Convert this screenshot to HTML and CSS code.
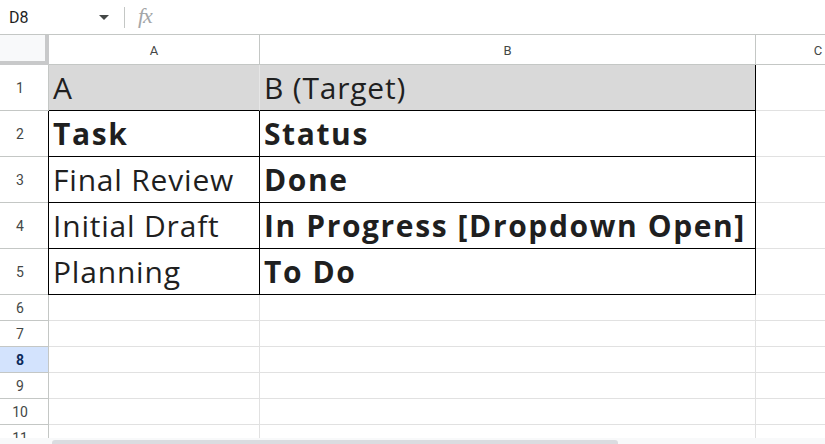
FILE: index.html
```html
<!DOCTYPE html>
<html lang="en">
<head>
<meta charset="utf-8">
<title>Sheet</title>
<link rel="stylesheet" href="styles.css">
</head>
<body>
<div class="app">
  <div class="fbar">
    <div class="namebox">
      <span class="ref">D8</span>
      <svg class="caret" width="10" height="5" viewBox="0 0 10 5"><path d="M0 0 L10 0 L5 5 Z" fill="#444746"/></svg>
    </div>
    <div class="sep"></div>
    <div class="fx">fx</div>
  </div>
  <div class="sheet">
    <div class="grid">
      <div class="corner"></div>
      <div class="ch">A</div>
      <div class="ch">B</div>
      <div class="ch">C</div>
      <div class="ch">D</div>

      <div class="rh">1</div>
      <div class="c fill bb">A</div>
      <div class="c fill bb br">B (Target)</div>
      <div class="c"></div>
      <div class="c"></div>

      <div class="rh">2</div>
      <div class="c bb br bl bold">Task</div>
      <div class="c bb br bold">Status</div>
      <div class="c"></div>
      <div class="c"></div>

      <div class="rh">3</div>
      <div class="c bb br bl">Final Review</div>
      <div class="c bb br bold">Done</div>
      <div class="c"></div>
      <div class="c"></div>

      <div class="rh">4</div>
      <div class="c bb br bl">Initial Draft</div>
      <div class="c bb br bold">In Progress [Dropdown Open]</div>
      <div class="c"></div>
      <div class="c"></div>

      <div class="rh">5</div>
      <div class="c bb br bl">Planning</div>
      <div class="c bb br bold">To Do</div>
      <div class="c"></div>
      <div class="c"></div>

      <div class="rh">6</div><div class="c"></div><div class="c"></div><div class="c"></div><div class="c"></div>
      <div class="rh">7</div><div class="c"></div><div class="c"></div><div class="c"></div><div class="c"></div>
      <div class="rh sel">8</div><div class="c"></div><div class="c"></div><div class="c"></div><div class="c"></div>
      <div class="rh">9</div><div class="c"></div><div class="c"></div><div class="c"></div><div class="c"></div>
      <div class="rh">10</div><div class="c"></div><div class="c"></div><div class="c"></div><div class="c"></div>
      <div class="rh">11</div><div class="c"></div><div class="c"></div><div class="c"></div><div class="c"></div>
    </div>
  </div>
  <div class="hscroll"><div class="thumb"></div></div>
</div>
</body>
</html>
```

FILE: styles.css
```css
* { box-sizing: border-box; }
html, body {
  margin: 0;
  padding: 0;
  width: 825px;
  height: 444px;
  overflow: hidden;
  background: #ffffff;
  font-family: Roboto, "Liberation Sans", Arial, sans-serif;
}
.app {
  display: flex;
  flex-direction: column;
  width: 825px;
  height: 444px;
}
.fbar {
  height: 35px;
  flex: none;
  display: flex;
  align-items: center;
  border-bottom: 1px solid #c4c7c5;
  background: #ffffff;
}
.namebox {
  width: 124px;
  display: flex;
  align-items: center;
  justify-content: space-between;
  padding: 0 15px 0 9px;
}
.ref {
  font-size: 16px;
  color: #1f1f1f;
}
.caret { display: block; margin-top: 1px; }
.sep {
  width: 1px;
  height: 21px;
  background: #c4c7c5;
}
.fx {
  margin-left: 13px;
  font-family: "Liberation Serif", "DejaVu Serif", serif;
  font-style: italic;
  font-size: 22px;
  color: #a3a6a8;
  letter-spacing: -1px;
  margin-top: -2px;
}
.sheet {
  flex: 1;
  overflow: hidden;
}
.grid {
  display: grid;
  grid-template-columns: 49px 211px 496px 125px 200px;
  grid-template-rows: 30px repeat(5, 46px) repeat(6, 26px);
}
.corner {
  background: #f8f9fa;
  box-shadow: inset -4px -4px 0 #c8c9ca;
}
.ch {
  display: flex;
  align-items: center;
  justify-content: center;
  font-size: 13px;
  color: #444746;
  border-right: 1px solid #c4c7c5;
  border-bottom: 1px solid #c4c7c5;
  padding-top: 1px;
  overflow: hidden;
}
.rh {
  display: flex;
  align-items: center;
  justify-content: center;
  padding-right: 8px;
  font-size: 14px;
  color: #444746;
  border-right: 1px solid #c4c7c5;
  border-bottom: 1px solid #c4c7c5;
  background: #ffffff;
}
.rh.sel {
  background: #d3e3fd;
  color: #0b2a5a;
  font-weight: 700;
}
.c {
  display: flex;
  align-items: flex-end;
  border-right: 1px solid #e1e1e1;
  border-bottom: 1px solid #e1e1e1;
  padding: 0 4px 5px 4px;
  font-family: "Open Sans", Roboto, sans-serif;
  font-size: 30px;
  line-height: 35px;
  letter-spacing: 0.8px;
  color: #1f1f1f;
  white-space: nowrap;
}
.fill { background: #d9d9d9; border-right-color: #e6e6e6; }
.bb { border-bottom-color: #000000; }
.br { border-right-color: #000000; }
.bl { box-shadow: -1px 0 0 #000000; }
.bold { font-weight: 700; letter-spacing: 1.6px; }
.hscroll {
  height: 6px;
  flex: none;
  background: #f8f9fa;
  padding: 2px 0 0 52px;
}
.thumb {
  width: 566px;
  height: 4px;
  background: #dadce0;
  border-radius: 3px 3px 0 0;
}
```
